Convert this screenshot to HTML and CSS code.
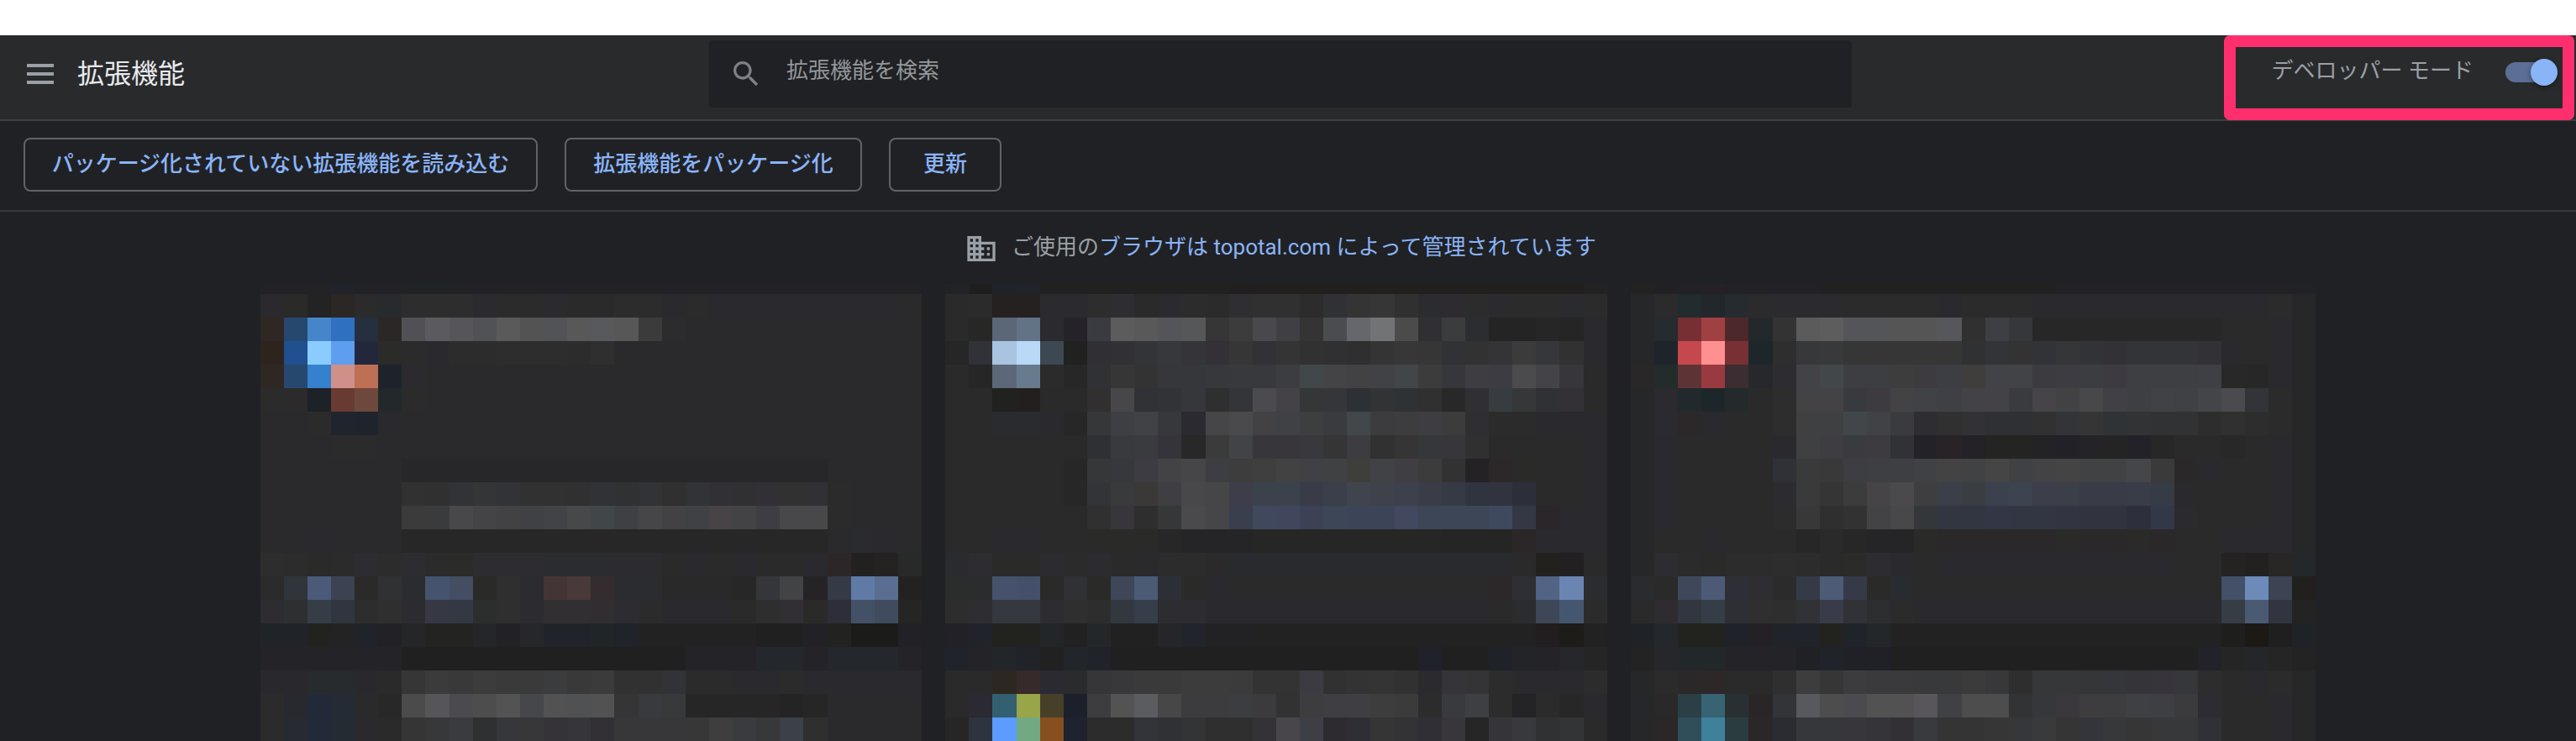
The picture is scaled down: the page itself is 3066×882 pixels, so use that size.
FILE: index.html
```html
<!DOCTYPE html>
<html lang="ja">
<head>
<meta charset="utf-8">
<title>拡張機能</title>
<link rel="stylesheet" href="styles.css">
</head>
<body>
<header class="header">
  <div class="brand">
    <svg class="menu-icon" viewBox="0 0 32 24"><path d="M0 0h32v4H0zM0 10h32v4H0zM0 20h32v4H0z"/></svg>
    <h1 class="title">拡張機能</h1>
  </div>
  <div class="search">
    <svg class="search-icon" viewBox="0 0 24 24"><path d="M15.5 14h-.79l-.28-.27C15.41 12.59 16 11.11 16 9.5 16 5.91 13.09 3 9.5 3S3 5.91 3 9.5 5.91 16 9.5 16c1.61 0 3.09-.59 4.23-1.57l.27.28v.79l5 4.99L20.49 19l-4.99-5zm-6 0C7.01 14 5 11.99 5 9.5S7.01 5 9.5 5 14 7.01 14 9.5 11.99 14 9.5 14z"/></svg>
    <span class="placeholder">拡張機能を検索</span>
  </div>
  <div class="dev-mode">
    <span class="dev-label">デベロッパー モード</span>
    <span class="toggle"><span class="knob"></span></span>
  </div>
  <div class="highlight"></div>
</header>
<nav class="toolbar">
  <button class="button load">パッケージ化されていない拡張機能を読み込む</button>
  <button class="button pack">拡張機能をパッケージ化</button>
  <button class="button update">更新</button>
</nav>
<main class="content">
  <div class="managed">
    <svg class="domain-icon" viewBox="0 0 24 24"><path d="M12 7V3H2v18h20V7H12zM6 19H4v-2h2v2zm0-4H4v-2h2v2zm0-4H4V9h2v2zm0-4H4V5h2v2zm4 12H8v-2h2v2zm0-4H8v-2h2v2zm0-4H8V9h2v2zm0-4H8V5h2v2zm10 12h-8v-2h2v-2h-2v-2h2v-2h-2V9h8v10zm-2-8h-2v2h2v-2zm0 4h-2v2h2v-2z"/></svg>
    <p class="managed-text">ご使用の<a class="link">ブラウザは topotal.com によって管理されています</a></p>
  </div>
  <div class="mosaics">
    <div class="mosaic" id="m0"></div>
    <div class="mosaic" id="m1"></div>
    <div class="mosaic wide" id="m2"></div>
  </div>
</main>
<script src="mosaic.js"></script>
</body>
</html>
```
FILE: styles.css
```css
* { box-sizing: border-box; }
body {
  margin: 0;
  padding-top: 42px;
  height: 882px;
  overflow: hidden;
  background: #fff;
  font-family: Roboto, "Noto Sans CJK JP", sans-serif;
  font-size: 26px;
  line-height: 40px;
  color: #9aa0a6;
}
.header {
  position: relative;
  display: grid;
  grid-template-columns: 844px 1360px 1fr;
  align-items: start;
  height: 102px;
  background: #292a2c;
  border-bottom: 2px solid #3f4042;
}
.brand { display: flex; align-items: center; gap: 28px; height: 92px; padding-left: 32px; }
.menu-icon { width: 32px; height: 24px; fill: #9aa0a6; }
.title { margin: 0; font-size: 32px; font-weight: 400; line-height: 48px; color: #e8eaed; }
.search {
  display: flex;
  gap: 28px;
  height: 80px;
  margin-top: 6px;
  padding: 0 24px;
  background: #202124;
  border-radius: 4px;
}
.search-icon { width: 40px; height: 40px; margin-top: 20px; fill: #7d8084; }
.placeholder { margin-top: 16px; color: #94979b; }
.dev-mode { display: flex; justify-content: flex-end; gap: 38px; padding: 22px 22px 0 0; }
.dev-label { letter-spacing: 0; }
.toggle {
  display: flex;
  align-items: center;
  justify-content: flex-end;
  width: 62px;
  height: 24px;
  margin-top: 10px;
  border-radius: 12px;
  background: linear-gradient(to right, #5b6f96 56px, transparent 56px);
}
.knob {
  width: 32px;
  height: 32px;
  flex: none;
  border-radius: 50%;
  background: #8ab4f8;
  box-shadow: 0 2px 6px rgba(0, 0, 0, .4);
}
.highlight {
  position: absolute;
  top: 0;
  right: 2px;
  width: 417px;
  height: 101px;
  border: 14px solid #ff2f6e;
  border-radius: 7px;
}
.highlight::after { content: ""; position: absolute; inset: 0; }
.toolbar {
  display: flex;
  gap: 32px;
  height: 108px;
  padding: 20px 28px;
  background: #202124;
  border-bottom: 2px solid #38393c;
}
.button {
  height: 64px;
  padding: 0 0 3px;
  font: 500 26px/40px Roboto, "Noto Sans CJK JP", sans-serif;
  white-space: nowrap;
  color: #8ab4f8;
  background: none;
  border: 2px solid #5f6368;
  border-radius: 8px;
}
.load { width: 612px; }
.pack { width: 354px; }
.update { width: 134px; }
.content { height: 630px; background: #202124; }
.managed { display: flex; gap: 16px; height: 86px; padding: 24px 0 0 1148px; }
.domain-icon { width: 40px; height: 40px; fill: #9aa0a6; }
.managed-text { margin: -2px 0 0; white-space: nowrap; }
.link { color: #8ab4f8; }
.mosaics { display: flex; gap: 28.13px; padding-left: 309.5px; }
.mosaic {
  display: grid;
  grid-template-columns: repeat(28, 28.13px);
  grid-template-rows: 12px repeat(19, 28px);
}
.wide { grid-template-columns: repeat(29, 28.13px); }
```
FILE: mosaic.js
```js
// Each line is one row of blocks: colour, with *n for a run. Two digits mean a plain grey.
const cards = [`
222125*2 232326 20232a 222125*2 202326*2 222125*20
2a292d 2a2a28 232323 2c2624 2b 282b2e 2d*3 2b2a2e 2b*2 2b2a2e 2a*2 2c*2 2a292e 2b 2a292d*8 2a
2e2724 26486f 4785cb 2f70bf 252f40 2b2726 505154 5b5a5e 565559 515255 5a5a5b 535354 515356 585859 58595c 575757 3b3b3c 2c2c2e .*10
2e241e 20508f 8accff 5d9eee 23273b 2b2b2a 2b 2a292d 2c*2 2d*3 2c 2f .*13
2e2724 26486f 3581cd d0908a be7054 1e232b 2b2a2e .*21
2b 2c2a2a 1d2128 673b31 6e483d 23282b 2b .*21
.*2 2b 20252d 1f232b 2a292d .*22
.*3 2b2b2c*2 .*23
.*6 27272a*18 .*4
.*6 313132 303031 313336 333537 313336 313132*2 303031 303236 303133 313336 303031 313336 313035 303032 313035 313132 313035 2b .*3
.*6 3b3b3c 3a3b3d 48484b 444447 424245 404144 424346 47484a 414648 3f4043 464649 424245 404144 474347 434346 3d3e41 48484a*2 2b .*3
.*2 2a292d .*3 272728*18 . 292b2e 2a292d .
2d 2c 2a2a28 2b 2d2c30 2c 2d2c30 2b 2b2b29 2d2c30*3 2b2c2f*3 2c2b2f*2 2a 2a292d 2a 2a292d 2a*2 2a292d 2c2628 232020 252321 282a2a
2b 30343b 4b5a78 3b4352 2a2a28 303133 2b2c2f 46536e 434e62 2a2a28 2f2f30 2c2b2f 433536 493938 352c2f 2a2c2f*2 29*3 27 343639 424345 262327 353a47 607aa6 596e91 232220
2d2c30 2e2f31 353e46 31353d 2d 2f 2c2b2f 363844 333842 2c2e2e 2f 2c2b2f 322f32*2 312d30 2d2c30 2b 2a292d*3 2a 2e 312f34 2a2a28 2e2e38 435167 404b5e 252624
202429*2 22221f 232323 21232a 222126 242628 232321*2 24262a 222126 25272a 20242a*2 202628 20232a 222223*5 202021*2 222126 222220 1b1b1a*2 222126
242328*6 202021*12 242328*3 24272b*2 242328 24272b*3 242328
28282d*2 282b2e*2 28282d 2a 363637 3b3b3c 39393a 3c3c3d 3a3a3b*2 3b3c3d 39393a 3b3b3c 313132*2 313336 2b*2 2a292d*2 2b 2a292d*5
2b 28292e 222a3a 252b34 2a 28 4b4b4c 565559 4b4a4e 4d4d4e 535354 45474a 525253 505152 525253 353536 383a3e 38393b 262627*4 242425 262627 .*4
2b 272a31 222a3a 232b33 2a292d 2a 353536 363839 3a3b3e 2f3032 36373a 37373a 353338 36363a 323035 37373a*3 37 3e3e3f 3a3b3e 363839 3c4048 2f .*4`, `
212326 1e1e1f 20222a 20242a 212121*8 211f1f*2 21201f*13 222223
2a 2b 252120*2 2b2a2e*2 2d 2e2d31 2a 2b2a2e 2c 2b 2f2e32 303031*2 2c 303134 343435 363637 303031 2b2c2f 2d2b2f 2c 2b2a2e 2b*2 2a2b2e 2b
2a 272726 5b6676 627287 2b2a2f 252329 3a3b40 5c5c5d 59595a 545559 565758 363637 3c3c3d 4a484d 403f44 343435 4b4c50 66676c 727375 4b4b4c 303034 3b3c3d 2b2d31 242425*2 262627 252526 2a292d
262627 313138 a8c4e1 b9d9f6 3e4852 212120 302f33 303035 333437 37383c 353439 333136 363637 323136 343435 313132 303032 2f 343435 373738 363637 313235 323233 343436 3b3b3c 36373b 313132 2a292d
2a 262626 5c6879 687b8e 2b 272728 303134 363637 333334 35373a*2 37383b 38393d*2 3c3d40 424749 444447 424245 414245 424649 3c3c3d 36373b 3e3e42 3d3c42 4b4b4d 444448 37373b 2a
2a*2 212120 241f1f 2a*2 303031 47474a 303236 313337 36373b 2f 333539 4b4b4f 434347 343637 35363a 2d3034 313334 2f3234 303031 28 302f34 373d3f 353738 303135 333136 2a
2a*2 292b2f*2 2a292d 272728 363738 3e3f42 414245 37383c 2b2a30 464648 4a4a4c 424245 404144 3d3e40 3a3b3e 424749 3c3c3e 3d3d3f 3d3d42 3c3c3d 2f2e32 2b2b2c*2 2a292d*3
2a*6 2e3034 393a3e 3a3b3f 35343a 28 3b3b3c 424346 37373b 38363b 38393c 353536 3c3c41 313132 353535 36373a 37373b 303031 2a*4 2a292d
2a*5 272728 363739 37383c 3c3c42 434346 464649 3d3e41 3c3d3c 3f3f3e 424243 404144 404142 3e3e3a 414245 403e43 3c3c3c 323233 252226 2c282a 2a2a28 2a*2 2a292d
2a*5 272728 323437 393a3b 3a3938 3e3e43 48484a 464647 3d3e49 3c424b*2 393b47 3b3f4a 3f444d 3f414b 3c414c 3a3d48 363a45 2f343f 31343e 2c2f3a 2a*2 2a292d
2a*6 303031 38363a 2e2e2f 363739 4a4a4c 464648 3a3f4d 3f485c 40475c 3b4255 3c4656 3c4558*2 414860 3c4657*3 3e485e 343845 2b2629 2a292d*2
2a*2 2a292d*2 2a*2 2a2a29*3 272728 252527*3 262625*8 252624*3 2b2729 2a292d*3
292b2f 2d2c31 2a2a28*2 2c2b30 2b 2c2b30 2a 2a2a2c 2c*2 2a 292a2e*12 2a 23211e 232021 2a
2b2d2d 2a2c2e 46526b 444f69 2a2a28 303134 2a2a28 3e4658 4a5b73 2d2f37 2a2a28 2a292e 2a*11 2c2729 2e2f35 526383 6a85b2 2a2c30
2d 2e2d32 36383f*2 2d2c31 2f 2d 333740 353e49 2d2c31*2 2a292d*12 2a 2a2c2f 3e4758 455670 2b
222127 20242a 22221f*2 232629 212122 24272a 212121*2 24262a 21242a 222225*2 222223*12 221e1f 1e1c18 222223
20232a 242328 22262a 20242a 212121 22262a 20232a 202021*13 20222a 202021*2 20222a 232428 242328 25272a 252526
2a*2 2d2722 362a2a 2b2a32 2a2b2c 363638 38383a 3a3a3b*2 3c3c3c*2 3b3b3c 333334*2 3c3b41 313132 333334 343435 313132 2b2a2f 353439 343436 2c 2a292d*3 2c
2a 2b2932 336070 98a548 46402a 1c202b 3d3d3f 535354 5b5c5f 474748 3c3c3e*2 3c3d41 3b3b3d 323233 3d3d3f 3f3e43*2 3d3d3e 3b3b3c 2c2c2d 383a3d 3d3f43 2c 242426 2b 272728 2a292d
262625 2d333f 5c9bff 71aa82 864f20 1f2230 2c*2 323439 2f3135 333436 2f 302f30 353237 48464b 3e3f46 2d2b30 2f2e34 353536 313335 302f35 38363b 262627 353439 38393c 2f3133 333436 2a`, `
222221 212023 222126 252125 222126*4 212121*10 222125*10 202226
262728 2b 222b2d 21272b 262b2f 2b 2b2a2e*3 2b*4 2a292e 2b*3 2a292d*10 2b 262728
262728 262b2d 772f33 a04043 4d282b 23282a 333334 5b5b5c 5d5d5e 545558*2 555556*2 56575a 303031 3e3f42 36373a 272728*8 2a*2 2a292d 262728
262728 1f242a c4484e ff9090 783034 1d272a 2e2e2f 37383a 38393a 363637*5 303132 323437 333334 313337 353637 323337 323136 323438*3 323136 2a292d 2a 2a292d 262728
2a2728 222c2b 5e3336 983a40 3b2d31 27282b 2d2c31 424346 424849 3d3e42 3c3e41 3e3d3e 3d3b40 3d3e44 3f3e3d 424346*2 3c3c40 3d3c42 3c3d41 3d3b41 3d3f43*3 3f4043 28 272728 2a292d 262728
262728 2b2a2e 22292d 1d272a 242a2c 2a 2d2d2e 434345*2 393a3e 3d3b40 434346 414245 3f4043 434347*2 3a3b3f 464448 424245 48484a 414145 3e3f43 414245 404144 444548 4a4a4f 323437 2b 262728
262728 2b2a2e 2c2829 2a292d 2a*2 2d 3f4042*2 414748 414245 3a3b3e 2e2d32 303031 323136 2e3033*2 313132 323438 353536 303335 313334 303234*2 2d 303031 2d 2b 262728
262728 2a292d 2a*4 2a292e 3f4042 3e3e42 3a3b3e 3d3b40 303236 232228 272326 242227 242423*2 232226 222127 242328 242424 232228 272727 2a*2 282829 2a 2a292d 262728
262728 2a292d 2a*4 303136 393a3c 39393a 3d3e41 3e3f42*2 404144 434344 414243 454545 3f4144 434345 454444 404244*2 444649 3a3a3b 2b282a 2a292d 2a*2 2a292d 262728
262728 2a292d 2a*4 2c2b30 393a3c 353536 3c3c3c 474448 4a4a4c 3e3e41 3a3f49 3a3e42 3c424d 3d434f 3c3e4a 3b3f48 393c47*2 383d48 373b45 2a292e 2a*3 2a292d 262728
262728 2a292d 2a*4 2c 37383a 2f2f30 323233 434345 48484a 343739 313641*2 333745 323643*2 323541 31343e*2 2d303c 333848 2b2a2e 2a*3 2a292d 262728
262728 2a*2 2a292e 2a*3 272728 2a 272728 252527*2 2a2a28 2b282a*5 2a2a28 2b282a*2 2a2a28 2b282a 2a*2 2a292d*3 262728
262728 2d2c31 2b 2a2a28 2c*2 2d 2c 2a 2b2b2a 2d2c31 2a292d 2a 2a292d*10 2a*2 252222 23211f 282725 25282a
292b2e 2a 3f485a 4c5a76 2e2f36 2e2d32 2b 353a47 4d5b74 363a48 2a2a28 292c2f 2a*13 444f68 6c8bb9 3c4352 21201f
2a 2e2c31 32363f 353e47 2e2f35 2f 2e 313236 393c48 313236 2c2e2f 2b 2a292d*13 363d45 4a5a73 32353f 232324
1f2227 24272b 22221f*2 20222a 232126 20242a*2 22221f 20242a 23272a 222223*14 1e1e1d 1c1916 1f1f20 1f2227
232324 25272a 222729*2 242328*3 1f2124 20232a 1f2126*2 202021*13 21222a 252526 25262a 252526 232324
262728 2b 2b282a 2d2727 2a*2 2f2f30 3d3d3e 363637 3c3c3e 3a3a3c*2 38393b*2 3b3b3c 38383a 2e2e2f 363739*2 353637 35363a 353439 37353b 36373a 2d 2a 2a292d 2b 262728
25272a 2b282a 2b3f46 386373 283033 2a2628 333437 58595c 4d4d4e 4b4a4f 525252*2 58565b 3f4144 4d4d4e*2 313335 36373b 3a383d 3d3d3f*2 3f4043 3d3f43 3b3b3d 2d2c31 2a*2 2a292d 262728
262728 2b2628 2f4e5a 3f819b 2a3c40 2b2628 2a2c31 36373b*2 37373b 353439 323035 393a3e 343435*2 363637 35373a 393a3b 353536 34353c 37383a 363637 37383a*2 303134 2a*2 2a292d 262728`];

cards.forEach((card, i) => {
  const grid = document.getElementById('m' + i);
  const width = i === 2 ? 29 : 28;
  card.trim().split('\n').forEach(line => {
    const row = [];
    line.split(' ').forEach(token => {
      const [value, count] = token.split('*');
      const color = value === '.' ? '2a2a2c' : value.length === 2 ? value.repeat(3) : value;
      for (let n = 0; n < (+count || 1); n++) row.push(color);
    });
    while (row.length < width) row.push('2a2a2c');
    row.slice(0, width).forEach(color => {
      const cell = document.createElement('div');
      cell.style.background = '#' + color;
      grid.append(cell);
    });
  });
});
```
